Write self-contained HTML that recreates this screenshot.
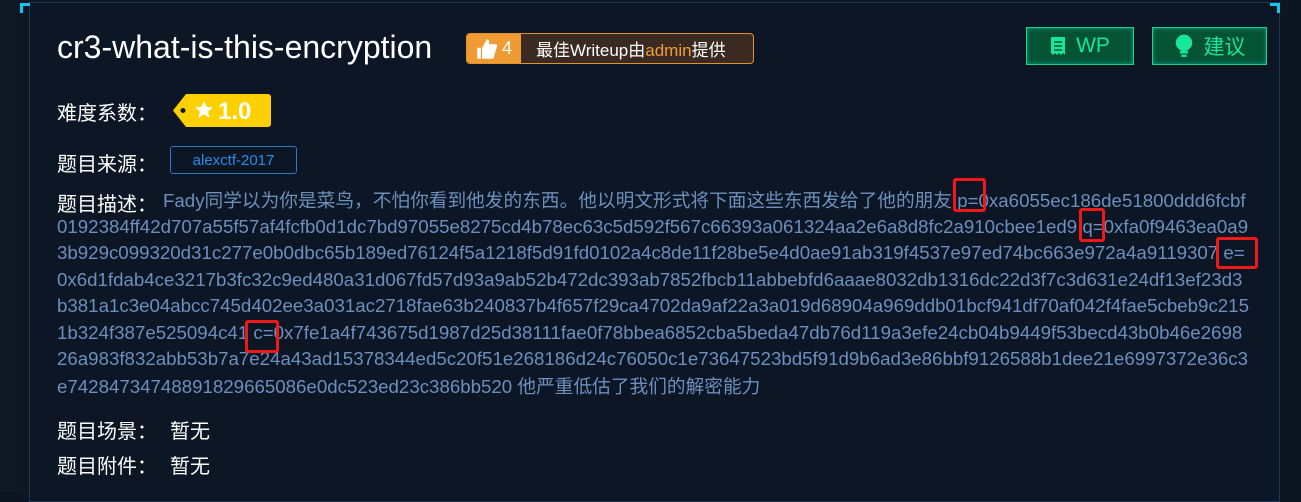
<!DOCTYPE html>
<html><head><meta charset="utf-8"><style>
*{margin:0;padding:0;box-sizing:border-box}
body{width:1301px;height:492px;overflow:hidden;background:#0b1622;font-family:"Liberation Sans","Noto Sans CJK SC",sans-serif;position:relative}
.left{position:absolute;left:0;top:0;width:29px;height:492px;background:linear-gradient(90deg,#101a26,#0d1723)}
.panel{position:absolute;left:29px;top:2px;width:1251px;height:500px;background:#0c1624;border:1px solid #1b3a5a}
.c{position:absolute;width:10px;height:10px;border-color:#12c8ea;border-style:solid}
.a{position:absolute;white-space:nowrap}
.lbl{color:#fff;font-size:20px}
.d{position:absolute;left:57px;white-space:nowrap;color:#6d8fbe;font-size:18.7px;line-height:20px}
.rb{position:absolute;border:3px solid #f01818;border-radius:3px}
.btn{position:absolute;top:27px;height:38px;background:#045335;border:1px solid #1fcf8a;color:#17e59a;font-size:21px;display:flex;align-items:center;justify-content:center;gap:10px;box-shadow:inset 0 0 4px #0a8;}
</style></head><body>
<div class="left"></div>
<div class="panel"></div>
<div class="c" style="left:20px;top:3px;border-width:3px 0 0 3px"></div>
<div class="c" style="left:1270px;top:3px;border-width:3px 3px 0 0"></div>
<div class="a" style="left:57px;top:29px;color:#fff;font-size:32px">cr3-what-is-this-encryption</div>
<div class="a" style="left:466px;top:33px;width:288px;height:31px;border:1px solid #e0902f;border-radius:4px;background:#3a2a22;display:flex;align-items:center">
 <div style="width:54px;height:29px;background:#f09a33;color:#fff;display:flex;align-items:center;justify-content:center;gap:4px;font-size:18px;border-radius:3px 0 0 3px"><svg width="22" height="22" viewBox="0 0 18 18"><path d="M1 8h3v9H1zM5 8l4-7c2 0 2 2 1.5 4H16c1.5 0 1.5 1.5 1 2.5l-2.5 8.5c-.3 1-1 1-2 1H5z" fill="#fff"/></svg>4</div>
 <span style="color:#fff;font-size:17px;margin-left:15px">最佳Writeup由<span style="color:#f0a030">admin</span>提供</span>
</div>
<div class="btn" style="left:1026px;width:108px"><svg width="16" height="22" viewBox="0 0 16 20"><path d="M1 1h14v18l-2-2-2 2-2-2-2 2-2-2-2 2-2-2z" fill="#17e59a"/><path d="M4 6h8M4 10h8M4 14h8" stroke="#045335" stroke-width="1.6"/></svg>WP</div>
<div class="btn" style="left:1152px;width:115px"><svg width="20" height="24" viewBox="0 0 18 22"><circle cx="9" cy="8" r="7.5" fill="#17e59a"/><rect x="5.5" y="15" width="7" height="3" fill="#17e59a"/><rect x="6.5" y="19" width="5" height="2" fill="#17e59a"/></svg>建议</div>
<div class="a lbl" style="left:57px;top:97px">难度系数：</div>
<svg class="a" style="left:172px;top:93px" width="99" height="35" viewBox="0 0 99 35"><path d="M14 1H96a3 3 0 0 1 3 3V31a3 3 0 0 1-3 3H14L1 17.5z" fill="#ffd000"/><circle cx="11" cy="17.5" r="2.5" fill="#0c1624"/><path d="M32 8l2.6 5.8 6.3.6-4.8 4.2 1.5 6.2-5.6-3.4-5.6 3.4 1.5-6.2-4.8-4.2 6.3-.6z" fill="#fff"/><text x="46" y="26" fill="#fff" font-size="24" font-weight="bold" font-family="Liberation Sans">1.0</text></svg>
<div class="a lbl" style="left:57px;top:148px">题目来源：</div>
<div class="a" style="left:170px;top:146px;width:127px;height:28px;border:1px solid #2a78c8;border-radius:3px;color:#2a8ae8;font-size:15px;display:flex;align-items:center;justify-content:center">alexctf-2017</div>
<div class="a lbl" style="left:57px;top:188px">题目描述：</div>
<div class="d" style="left:163px;top:191px">Fady同学以为你是菜鸟，不怕你看到他发的东西。他以明文形式将下面这些东西发给了他的朋友 p=0xa6055ec186de51800ddd6fcbf</div>
<div class="d" style="top:217px">0192384ff42d707a55f57af4fcfb0d1dc7bd97055e8275cd4b78ec63c5d592f567c66393a061324aa2e6a8d8fc2a910cbee1ed9 q=0xfa0f9463ea0a9</div>
<div class="d" style="top:243px">3b929c099320d31c277e0b0dbc65b189ed76124f5a1218f5d91fd0102a4c8de11f28be5e4d0ae91ab319f4537e97ed74bc663e972a4a9119307 e=</div>
<div class="d" style="top:270px">0x6d1fdab4ce3217b3fc32c9ed480a31d067fd57d93a9ab52b472dc393ab7852fbcb11abbebfd6aaae8032db1316dc22d3f7c3d631e24df13ef23d3</div>
<div class="d" style="top:296px">b381a1c3e04abcc745d402ee3a031ac2718fae63b240837b4f657f29ca4702da9af22a3a019d68904a969ddb01bcf941df70af042f4fae5cbeb9c215</div>
<div class="d" style="top:323px">1b324f387e525094c41 c=0x7fe1a4f743675d1987d25d38111fae0f78bbea6852cba5beda47db76d119a3efe24cb04b9449f53becd43b0b46e2698</div>
<div class="d" style="top:349px">26a983f832abb53b7a7e24a43ad15378344ed5c20f51e268186d24c76050c1e73647523bd5f91d9b6ad3e86bbf9126588b1dee21e6997372e36c3</div>
<div class="d" style="top:377px">e74284734748891829665086e0dc523ed23c386bb520 他严重低估了我们的解密能力</div>
<div class="rb" style="left:953px;top:178px;width:33px;height:34px"></div>
<div class="rb" style="left:1079px;top:208px;width:26px;height:34px"></div>
<div class="rb" style="left:1216px;top:237px;width:42px;height:32px"></div>
<div class="rb" style="left:245px;top:320px;width:34px;height:33px"></div>
<div class="a lbl" style="left:57px;top:415px">题目场景：</div><div class="a lbl" style="left:170px;top:415px">暂无</div>
<div class="a lbl" style="left:57px;top:450px">题目附件：</div><div class="a lbl" style="left:170px;top:450px">暂无</div>
</body></html>
